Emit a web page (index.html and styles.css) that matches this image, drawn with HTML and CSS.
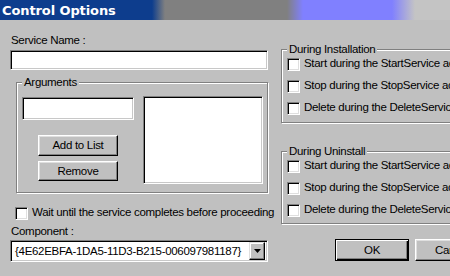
FILE: index.html
```html
<!DOCTYPE html>
<html>
<head>
<meta charset="utf-8">
<link rel="stylesheet" href="styles.css">
</head>
<body>
<div class="win">
  <div class="titlebar"><span class="title">Control Options</span></div>
  <div class="main">
    <div class="left">
      <div class="label lbl-service">Service Name :</div>
      <div class="field field-service"></div>
      <div class="group group-args">
        <span class="legend">Arguments</span>
        <div class="args-left">
          <div class="field field-arg"></div>
          <div class="btn btn-add">Add to List</div>
          <div class="btn btn-remove">Remove</div>
        </div>
        <div class="field listbox"></div>
      </div>
      <div class="check-row wait"><span class="cb"></span><span class="cb-text">Wait until the service completes before proceeding</span></div>
      <div class="label lbl-comp">Component :</div>
      <div class="field combo">
        <span class="combo-text">{4E62EBFA-1DA5-11D3-B215-006097981187}</span>
        <span class="combo-btn"><svg width="7" height="4" viewBox="0 0 7 4"><path d="M0 0H7L3.5 4Z" fill="#000"/></svg></span>
      </div>
    </div>
    <div class="right">
      <div class="group group-opt group-install">
        <span class="legend">During Installation</span>
        <div class="check-row opt"><span class="cb"></span><span class="cb-text">Start during the StartService action</span></div>
        <div class="check-row opt"><span class="cb"></span><span class="cb-text">Stop during the StopService action</span></div>
        <div class="check-row opt"><span class="cb"></span><span class="cb-text">Delete during the DeleteService action</span></div>
      </div>
      <div class="group group-opt group-uninstall">
        <span class="legend">During Uninstall</span>
        <div class="check-row opt"><span class="cb"></span><span class="cb-text">Start during the StartService action</span></div>
        <div class="check-row opt"><span class="cb"></span><span class="cb-text">Stop during the StopService action</span></div>
        <div class="check-row opt"><span class="cb"></span><span class="cb-text">Delete during the DeleteService action</span></div>
      </div>
      <div class="buttons">
        <div class="btn btn-ok">OK</div>
        <div class="btn btn-cancel">Cancel</div>
      </div>
    </div>
  </div>
</div>
</body>
</html>
```
FILE: styles.css
```css
html, body {
  margin: 0;
  padding: 0;
}
body {
  width: 450px;
  height: 276px;
  overflow: hidden;
  background: #c0c0c0;
  font-family: "Liberation Sans", Arial, sans-serif;
  font-size: 11.5px;
  letter-spacing: -0.3px;
  line-height: 15px;
  color: #000;
}
.win {
  width: 450px;
  height: 276px;
  overflow: hidden;
}
.titlebar {
  height: 20px;
  background: linear-gradient(to right,
    #0d3d8d 0, #0d3d8d 152px,
    #808080 165px, #808080 287px,
    #8080ff 303px, #8080ff 392px,
    #c4c4c4 415px, #c4c4c4 450px);
  display: flex;
  align-items: center;
}
.title {
  font-family: "DejaVu Sans", sans-serif;
  font-weight: bold;
  font-size: 13px;
  letter-spacing: -0.1px;
  color: #fff;
  padding-left: 2px;
  white-space: nowrap;
}
.main {
  display: flex;
  padding: 13px 0 0 10px;
}
.left {
  width: 258px;
  flex: none;
  display: flex;
  flex-direction: column;
}
.right {
  width: 220px;
  flex: none;
  margin-left: 13px;
  display: flex;
  flex-direction: column;
}
.label {
  white-space: nowrap;
  height: 15px;
  padding-left: 1px;
}
.field {
  box-sizing: border-box;
  background: #fff;
  border: 1px solid;
  border-color: #808080 #fff #fff #808080;
  box-shadow: inset 1px 1px #000, inset -1px -1px #c8c8c8;
}
.field-service {
  margin-top: 2px;
  height: 20px;
  width: 258px;
}
.group {
  position: relative;
  box-sizing: border-box;
  border: 1px solid #808080;
  box-shadow: inset 1px 1px #fff, 1px 1px #fff;
}
.legend {
  position: absolute;
  top: -8px;
  left: 5px;
  padding: 0 2px;
  background: #c0c0c0;
  white-space: nowrap;
  line-height: 15px;
}
.group-args {
  margin-top: 12px;
  margin-left: 6px;
  width: 252px;
  height: 111px;
  display: flex;
  align-items: flex-start;
  padding: 14px 0 0 5px;
}
.args-left {
  width: 112px;
  display: flex;
  flex-direction: column;
}
.field-arg {
  height: 23px;
  width: 112px;
}
.btn {
  box-sizing: border-box;
  border: 1px solid;
  border-color: #fff #000 #000 #fff;
  box-shadow: inset -1px -1px #808080, inset 1px 1px #dfdfdf;
  display: flex;
  align-items: center;
  justify-content: center;
  white-space: nowrap;
  background: #c0c0c0;
}
.btn-add {
  margin: 15px 0 0 16px;
  width: 80px;
  height: 21px;
}
.btn-remove {
  margin: 5px 0 0 16px;
  width: 80px;
  height: 20px;
}
.listbox {
  margin: -1px 0 0 9px;
  width: 120px;
  height: 88px;
}
.check-row {
  display: flex;
  align-items: flex-start;
  white-space: nowrap;
}
.cb {
  flex: none;
  box-sizing: border-box;
  width: 13px;
  height: 13px;
  margin-top: 2px;
  background: #fff;
  border: 1px solid;
  border-color: #808080 #fff #fff #808080;
  box-shadow: inset 1px 1px #000, inset -1px -1px #dfdfdf;
}
.cb-text {
  margin-left: 4px;
}
.wait {
  margin-top: 12px;
  margin-left: 5px;
  height: 15px;
}
.lbl-comp {
  margin-top: 4px;
}
.combo {
  margin-top: 1px;
  height: 22px;
  width: 258px;
  display: flex;
  align-items: center;
  justify-content: space-between;
  padding: 0 2px 0 4px;
}
.combo-text {
  white-space: nowrap;
}
.combo-btn {
  box-sizing: border-box;
  width: 16px;
  height: 18px;
  border: 1px solid;
  border-color: #dfdfdf #000 #000 #dfdfdf;
  box-shadow: inset -1px -1px #808080, inset 1px 1px #fff;
  background: #c0c0c0;
  display: flex;
  align-items: center;
  justify-content: center;
}
.group-opt {
  width: 220px;
  display: flex;
  flex-direction: column;
  padding: 6px 0 0 5px;
}
.group-install {
  margin-top: 16px;
  height: 74px;
}
.group-uninstall {
  margin-top: 28px;
  height: 73px;
}
.opt {
  height: 22px;
}
.opt:nth-child(4) {
  height: 20px;
}
.buttons {
  display: flex;
  margin: 15px 0 0 54px;
  gap: 6px;
}
.btn-ok {
  width: 74px;
  height: 22px;
  border: 1px solid #000;
  box-shadow: inset 1px 1px #fff, inset -1px -1px #000, inset -2px -2px #808080;
}
.btn-cancel {
  width: 74px;
  height: 22px;
}
```
